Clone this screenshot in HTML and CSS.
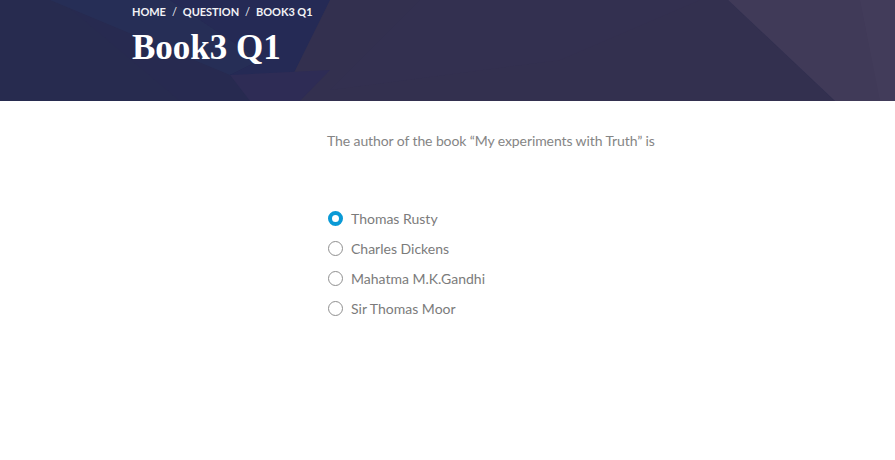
FILE: index.html
```html
<!DOCTYPE html>
<html>
<head>
<meta charset="utf-8">
<link rel="stylesheet" href="styles.css">
</head>
<body>
<header class="banner">
  <svg class="banner-bg" width="895" height="101" viewBox="0 0 895 101" preserveAspectRatio="none">
    <rect x="0" y="0" width="895" height="101" fill="#272a50"/>
    <polygon points="0,0 60,0 180,101 0,101" fill="#272b4f"/>
    <polygon points="50,0 170,0 260,60 230,75" fill="#273057" opacity="0.8"/>
    <polygon points="170,0 420,0 360,101 260,101 230,75 260,60" fill="#252a55"/>
    <polygon points="330,0 728,0 835,101 280,101" fill="#33304f"/>
    <polygon points="230,75 330,70 300,101 250,101" fill="#2e2c55"/>
    <polygon points="420,0 700,0 560,60 330,90" fill="#343151" opacity="0.6"/>
    <polygon points="728,0 895,0 895,101 835,101" fill="#403a58"/>
    <polygon points="860,0 895,0 895,101 880,101" fill="#443e5b" opacity="0.6"/>
  </svg>
  <div class="banner-inner">
    <nav class="crumbs">
      <span>HOME</span><span class="sep">/</span><span>QUESTION</span><span class="sep">/</span><span>BOOK3 Q1</span>
    </nav>
    <h1 class="title">Book3 Q1</h1>
  </div>
</header>
<main class="content">
  <p class="question">The author of the book “My experiments with Truth” is</p>
  <ul class="options">
    <li class="option"><span class="radio checked"></span><span>Thomas Rusty</span></li>
    <li class="option"><span class="radio"></span><span>Charles Dickens</span></li>
    <li class="option"><span class="radio"></span><span>Mahatma M.K.Gandhi</span></li>
    <li class="option"><span class="radio"></span><span>Sir Thomas Moor</span></li>
  </ul>
</main>
</body>
</html>
```
FILE: styles.css
```css
html, body {
  margin: 0;
  padding: 0;
  background: #ffffff;
}
body {
  font-family: Lato, "Open Sans", sans-serif;
}
.banner {
  position: relative;
  height: 101px;
  overflow: hidden;
  background: #272a50;
}
.banner-bg {
  position: absolute;
  left: 0;
  top: 0;
  width: 100%;
  height: 100%;
  display: block;
}
.banner-inner {
  position: relative;
  padding-left: 132px;
  padding-top: 4px;
}
.crumbs {
  font-family: Lato, sans-serif;
  font-weight: 700;
  font-size: 11px;
  line-height: 15px;
  color: #f2f2f5;
  letter-spacing: -0.05px;
}
.crumbs .sep {
  margin: 0 6px;
  font-weight: 400;
}
.title {
  margin: 9px 0 0 0;
  font-family: "Liberation Serif", "Times New Roman", serif;
  font-weight: 700;
  font-size: 35px;
  line-height: 40px;
  color: #ffffff;
}
.content {
  padding-left: 327px;
  padding-top: 30px;
}
.question {
  margin: 0;
  font-size: 14px;
  line-height: 20px;
  color: #858585;
  letter-spacing: -0.1px;
}
.options {
  list-style: none;
  margin: 52px 0 0 0;
  padding: 0;
}
.option {
  display: flex;
  align-items: center;
  height: 30px;
  font-size: 14px;
  color: #7b7b7b;
}
.radio {
  box-sizing: border-box;
  width: 15px;
  height: 15px;
  border-radius: 50%;
  border: 1px solid #8f8f8f;
  margin-left: 1px;
  margin-right: 8px;
  background: #fff;
}
.radio.checked {
  border: 4.5px solid #0a9ad6;
}
```
